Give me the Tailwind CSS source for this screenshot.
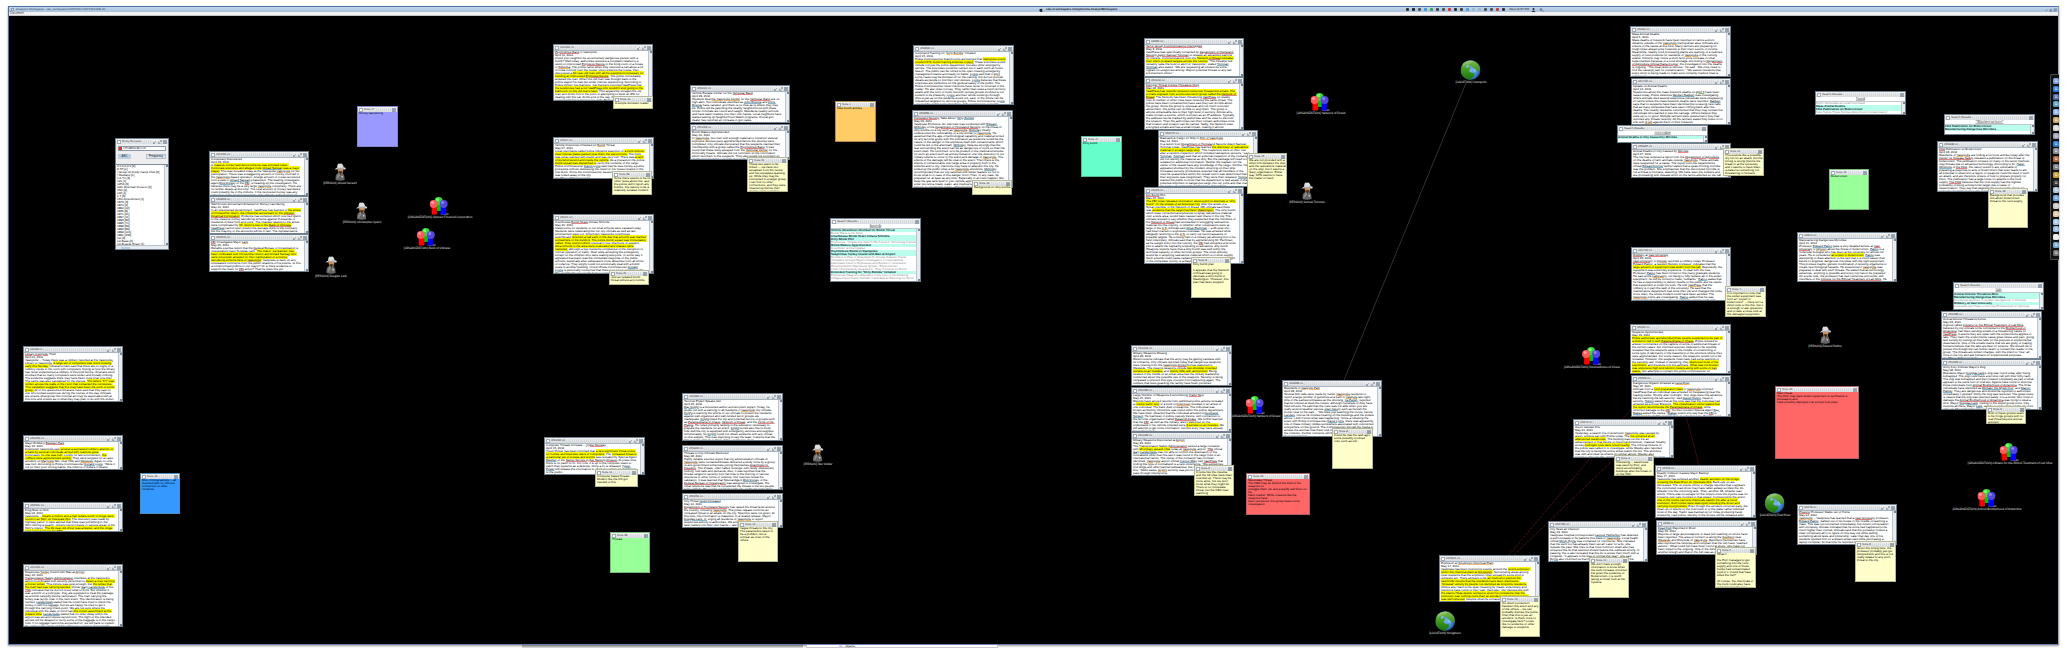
<!DOCTYPE html>
<html lang="en">
<head>
<meta charset="utf-8">
<title>Analyst's Workspace</title>
<script src="https://cdn.jsdelivr.net/npm/@tailwindcss/browser@4"></script>
</head>
<body class="bg-white text-black font-['Liberation_Sans_Narrow','Liberation_Sans',sans-serif] text-[3px] leading-[3px] [text-rendering:geometricPrecision]">
<main class="relative flex h-screen flex-col px-2 pt-[6px] pb-3">
  <div class="flex min-h-0 flex-1 flex-col border border-[#4f72ad] border-r-[#9aa5b5] border-b-[#6a7fb4] shadow-[0_1px_2px_rgba(0,0,0,0.4)]">
    <header class="flex h-[5px] shrink-0 items-center bg-[#b5cbe2] bg-linear-to-b from-[#c3d5e8] to-[#a9c2dc] pl-px pr-px font-['Liberation_Sans',sans-serif]">
      <span class="mx-px size-[3px] border border-[#8c9aa8] bg-white"></span>
      <h1 class="w-[1024px] pl-px text-[#33475c]">Analyst's Workspace - /aw_workspace/VAST2011/VAST2011DB.db</h1>
      <svg class="mr-[3px] size-[4px]" viewBox="0 0 10 10"><path d="M5 3c1-1 3-1 4 0-2 1-2 4 0 5-1 2-2 2-4 1.500C3 10 1 8 1 5.500S3 2 5 3zM5 2c0-1 1-2 2-2 0 1-1 2-2 2z" fill="#222"/></svg>
      <b class="text-[#222]">edu.vt.workspace.components.AnalystWorkspace</b>
      <div id="status" class="ml-auto mr-[4px] flex items-center gap-[3px]"></div>
      <span class="text-[#222]">Wed 12:37 PM</span>
      <svg class="ml-[2px] mr-[500px] h-[4px] w-[14px]" viewBox="0 0 28 8"><circle cx="5" cy="2" r="2" fill="#222"/><path d="M1 8q4-6 8 0z" fill="#222"/><circle cx="20" cy="3" r="2" fill="none" stroke="#333"/><path d="M22 5l3 3" stroke="#333"/></svg>
      <svg class="h-[4px] w-[12px]" viewBox="0 0 36 12"><path d="M2 10l5-6M14 10l7-7M16 3v7h6" stroke="#456" stroke-width="1.500" fill="none"/><path d="M27 2h8v8h-8zM27 2l8 8M35 2l-8 8" stroke="#456" fill="none"/></svg>
    </header>
    <nav class="flex h-[4px] shrink-0 items-center border-b border-[#c4c4c4] bg-[#f2f2f2] pl-px font-['Liberation_Sans',sans-serif]"><button class="text-[#333]">Document</button></nav>
    <section id="desk" class="relative min-h-0 flex-1 overflow-hidden bg-black"></section>
  </div>
  <aside id="dock" class="absolute right-2 top-[74px] flex h-[186px] w-[9px] flex-col items-center justify-between rounded-l-xs border border-r-0 border-[#4a4a4a] bg-[#111] py-[3px] pl-px" aria-label="Dock"></aside>
  <div class="absolute bottom-[9px] left-[522px] flex h-[3px] w-[476px]" aria-hidden="true">
    <div class="w-[281px] bg-linear-to-b from-[#777] to-[#e6e6e6]"></div>
    <div class="ml-[3px] flex flex-1 items-center border border-t-0 border-[#c8c8c8] bg-white pl-[32px] leading-[2px]"><span class="text-[#7030c0]">int</span><span class="pl-[3px]">objects;</span></div>
  </div>
</main>
<script>
const desk = document.getElementById('desk');
// Canvas coordinates are page coordinates; the desk starts at 9,16.
const place = (x, y, w, h) => `left:${x - 9}px;top:${y - 16}px;` + (w ? `width:${w}px;` : '') + (h ? `height:${h}px` : '');
const add = html => desk.insertAdjacentHTML('beforeend', html);

const rich = t => t
  .replace(/\[/g, '<mark class="bg-[#ffff00] text-black">').replace(/\]/g, '</mark>')
  .replace(/\{r /g, '<u class="underline decoration-[#e88888] decoration-1 underline-offset-0">')
  .replace(/\{o /g, '<u class="underline decoration-[#f4bc78] decoration-1 underline-offset-0">')
  .replace(/\{b /g, '<u class="underline decoration-[#8cbcd4] decoration-1 underline-offset-0">')
  .replace(/\{g /g, '<u class="underline decoration-[#80c880] decoration-1 underline-offset-0">')
  .replace(/\}/g, '</u>');
// Headline and date keep their own lines, the story flows, the credit line stands last.
const flow = t => {
  const [head, date, ...rest] = t.split('\n');
  const tail = /^(\{r )?VastPress\}? 2011/.test(rest[rest.length - 1]) ? '\n' + rest.pop() : '';
  return head + '\n' + date + '\n' + rest.join(' ') + tail;
};
const flowNote = t => t.split('\n\n').map(p => p.replace(/\n/g, ' ')).join('\n\n');

const close = '<button aria-label="Close" class="size-[4px] shrink-0"><svg viewBox="0 0 8 8" class="size-full"><path d="M1 1h6v6H1zM1 1l6 6M7 1L1 7" fill="#c9d2da" stroke="#5f7080"/></svg></button>';
const winButtons = '<button aria-label="Minimize" class="size-[4px] shrink-0"><svg viewBox="0 0 8 8" class="size-full"><path d="M1 7l5-5M1 4v3h3" fill="none" stroke="#5f7080"/></svg></button><button aria-label="Maximize" class="size-[4px] shrink-0"><svg viewBox="0 0 8 8" class="size-full"><path d="M1 3v4h4M3 5l4-4M4 1h3v3" fill="none" stroke="#5f7080"/></svg></button>';
const bar = (title, buttons) => `<header class="flex h-[5px] shrink-0 items-center gap-px bg-[#e4e6e8] bg-linear-to-b from-[#f4f4f4] to-[#d9dcdf] px-px">
  <span class="size-[4px] shrink-0 border border-[#a0acb8] bg-white"></span><h2 class="whitespace-nowrap font-['Liberation_Sans',sans-serif] text-[#3a3a3a]">${title}</h2>
  <span class="h-[3px] flex-1 bg-[repeating-linear-gradient(90deg,#c6cbd0_0_1px,transparent_1px_2px)] opacity-50"></span>${buttons}</header>`;
const scroller = '<div class="flex w-[4px] shrink-0 flex-col items-center justify-between border-l border-[#b8c4ce] bg-[#e8ecf0]"><i class="h-[2px] w-[2px] bg-[#7b8894]"></i><i class="h-[2px] w-[2px] bg-[#7b8894]"></i></div>';

function doc(x, y, w, h, title, text) {
  add(`<article style="${place(x, y, w, h)}" class="absolute flex flex-col overflow-hidden border border-[#71818f] bg-white">${bar(title + '.txt', winButtons + close)}
  <div class="flex min-h-0 flex-1 border-t border-[#a9b6c2]"><div class="min-w-0 flex-1 overflow-hidden whitespace-pre-wrap pl-px pr-[3px]">${rich(flow(text))}</div>${scroller}</div></article>`);
}
const tints = {
  yellow: 'border-[#b4b894] bg-[#ffffcc]', purple: 'border-[#8486c8] bg-[#9999ff]', orange: 'border-[#b08c50] bg-[#ffcc66]',
  teal: 'border-[#57b89c] bg-[#66ffcc]', green: 'border-[#78b878] bg-[#99ff99]', blue: 'border-[#4c8cc4] bg-[#3399ff]', red: 'border-[#b06068] bg-[#ff6666]'
};
function note(x, y, w, h, n, tint, text) {
  add(`<article style="${place(x, y, w, h)}" class="absolute flex flex-col overflow-hidden border ${tints[tint]}">${bar('Note ' + n, close)}<p class="whitespace-pre-wrap pl-px">${tint === 'red' ? text : flowNote(text)}</p></article>`);
}
function search(x, y, w, h, term, rows) {
  add(`<article style="${place(x, y, w, h)}" class="absolute flex flex-col overflow-hidden border border-[#71818f] bg-white">${bar('Search Results', close)}
  <h3 class="h-[4px] shrink-0 text-center text-[4px] leading-[4px] text-[#444] font-['DejaVu_Sans',sans-serif] underline decoration-1 underline-offset-0 decoration-[#bbb]">${term}</h3>
  <div class="flex min-h-0 flex-1 border-t border-[#c0c8d0]"><ul class="min-w-0 flex-1 overflow-hidden">${rows.map(r => r[0] === '*'
    ? `<li class="truncate bg-[#bbfdec] font-bold text-[#123]">${r.slice(1)}</li>` : `<li class="truncate text-[#8a8a8a]">${r}</li>`).join('')}</ul>${scroller}</div></article>`);
}
const art = {
  person: '<svg class="h-[18px] w-[12px]" viewBox="0 0 24 36"><path d="M3 34q-1-12 5-14h8q5 2 5 14-9 3-18 0z" fill="#666"/><path d="M5 33q0-9 5-12l2 4 3-4" fill="#8d8d8d"/><path d="M7 12h11q1 8-4 10h-3q-4-2-4-10z" fill="#c98f55"/><path d="M8 17q5-2 9 0l-2 3-2 4-3-4z" fill="#432"/><path d="M1 13q3-3 5-4 0-7 3-8 3 1 4 0 4-1 6 7l4 2q1 3-2 3-10-2-20 0z" fill="#dedede"/><path d="M6 9q6 2 13-1l1 3q-7 2-14 1z" fill="#a8a8a8"/><path d="M14 25l4 2-2 3z" fill="#ddd"/></svg>',
  org: '<svg class="h-[18px] w-[20px]" viewBox="0 0 40 36"><ellipse cx="30" cy="34" rx="9" ry="1.500" fill="#888"/><rect x="13" y="12" width="11" height="16" rx="2" fill="#00c800"/><circle cx="18" cy="8" r="8" fill="#33dd33"/><circle cx="16" cy="5" r="3" fill="#8f8"/><rect x="4" y="19" width="11" height="16" rx="2" fill="#f00"/><circle cx="8" cy="14" r="8" fill="#ff5a5a"/><circle cx="6" cy="11" r="3" fill="#ffa0a0"/><rect x="22" y="19" width="11" height="16" rx="2" fill="#00f"/><circle cx="28" cy="14" r="8" fill="#5547dd"/><circle cx="26" cy="11" r="3" fill="#8d85f0"/></svg>',
  globe: '<svg class="size-[20px]" viewBox="0 0 40 40"><defs><radialGradient id="sea" cx=".5" cy=".5"><stop offset="0" stop-color="#7db8ee"/><stop offset=".75" stop-color="#3c82d0"/><stop offset="1" stop-color="#1c4a88"/></radialGradient><linearGradient id="land" x2="0" y2="1"><stop offset="0" stop-color="#7fb848"/><stop offset=".5" stop-color="#3f9a1c"/><stop offset="1" stop-color="#1d7010"/></linearGradient></defs><circle cx="20" cy="20" r="20" fill="url(#sea)"/><path d="M5 7Q14-1 26 2q9 3 12 11l1 8-5 2-4-5-5-3-3-4-4 2 2 5-4 4 5 3 7 2-1 6-5 3-1 4Q8 39 2 28-1 17 5 7z" fill="url(#land)"/><path d="M11 12l4-3 3 2-3 4-3 1zM24 17l5 1 3 5-3 2-4-3z" fill="#7db8ee"/><path d="M5 7Q14-1 26 2l-6 5q-8 0-15 7z" fill="#fff" opacity=".2"/></svg>'
};
function entity(kind, cx, y, label) {
  add(`<figure style="${place(cx, y)}" class="absolute flex w-max -translate-x-1/2 flex-col items-center gap-px text-[#e4e4e4]">${art[kind]}<figcaption class="font-['Lato',sans-serif]">${label}</figcaption></figure>`);
}

// Relation lines
add(`<svg class="absolute inset-0 size-full" viewBox="9 16 2049 628" preserveAspectRatio="xMinYMin slice" fill="none" aria-hidden="true">
<path d="M1466 83L1344 380" stroke="#303030"/><path d="M1509 555L1632 408M1514 555L1660 415M1686 416L1699 465" stroke="#701818" stroke-dasharray="1 1"/></svg>`);

// Entity browser
add(`<article style="${place(115, 138, 54, 112)}" class="absolute flex flex-col overflow-hidden border border-[#71818f] bg-[#eeeeee] font-['Liberation_Sans',sans-serif]">${bar('Entity Browser', winButtons + close)}
<div class="flex flex-col gap-[3px] px-[2px] py-[2px]">
<select aria-label="Entity type" class="h-[5px] w-full appearance-none border border-[#8a9aaa] bg-white bg-[linear-gradient(90deg,#d33_0_3px,transparent_3px)] pl-[4px] text-[#333]"><option>ORGANIZATION</option></select>
<div class="flex justify-between"><button class="h-[5px] w-[13px] bg-[#b8cfe5] text-[#333]">ABC</button><button class="h-[5px] w-[20px] border border-[#b0bcc8] bg-[#dfe9f3]">Frequency</button></div></div>
<div class="mt-[3px] flex min-h-0 flex-1 border-t border-[#7b8b9c] bg-white"><ul class="flex-1 whitespace-pre pl-px">${
['0 0 0 0 0 0 [2]','9 TH [1]','! Group Of Kiddy Camp Club [3]','! Mudland [1]','1 A TV [3]','121 [1]','12HA [3]','10th Mountain Division [2]','15th [2]','142 [1]','1 T [6]','15th Amendment [1]','187K [3]','1870 [4]','1890 [12]','1835 [8]','1871 [21]','1897 [11]','1893 [96]','1895 [71]','1898 [99]','1896 [89]','1899 [101]','1891 [236]','1st [3]','1st Base [2]','1st Boards Exam [1]','1st District of California [1]'].map(s => `<li>${s}</li>`).join('')}</ul>${scroller}</div>
<div class="flex h-[4px] shrink-0 items-center border-t border-[#b8c4ce] bg-[#e8ecf0] px-[3px]"><i class="ml-[2px] h-[2px] w-[9px] bg-[#b8cfe5]"></i></div></article>`);

doc(209,151,100,45,'041234',`Conspiracy Discovered
April 23, 2011
A [massive money laundering scheme was exposed today. Corporate executive
and alleged mole {b Omaid Sarwari} was a major player.] This was revealed today at
the Vastopolis {o Vastopolis} for her participation. There was a staggering amount
of money involved in the {o Vastopolis}-based operation. A large amount of it was
recovered from a safe in {b Omaid Sarwari}'s basement. The leading investigator,
agent {b Rick Dorsey} of the {r FBI}, is heading up the investigation. He believes there
may be a very large {o Vastopolis} conspiracy. There are no further details at this
time. The total amount of money laundered could possibly be in the millions. If
the recovered money was any indication of the group's prospects. City officials at
the Capitol are cooperating with the investigation.`);
doc(209,196,100,38,'050843',`Well Known Accountant Arrested for Money Laundering
May 10, 2011
In an unexpected development, {b VastPress} has learned of [the arrest of
{b Christopher Quinn}, the influential accountant for the {r Uptown Financial
Corporation}.] Evidence has surfaced which now tied Quinn to the massive money
laundering scheme against thousands of residents of New York and more. The
charges relating to the arrest were complicated by [Mr. Quinn's ties to the {r Bank
of Chinese}.] {b VastPress} cannot even predict the damage done to the company
but the majority of the accounts will be in tact. The representative lawyer
has yet to be announced.`);
doc(209,234,100,38,'050974',`{r FBI} Investigates Major {o Lack}
May 25, 2011
Reliable sources report that the {r Federal Bureau of Investigation} is investigating
major {b Douglas Lack}. [The mayor, we learned, has been implicated with
{b Christopher Quinn} and {b Omaid Sarwari} who were previously arrested for their
participation in a money laundering scheme here in {o Vastopolis}.] Vastpress is
back on any unreleased comments from the public relations of his events. Is this a
compromised politics in our mayor? Or is there evidence to support the claim
for {r FBI} action? That he does this yet.
VastPress 2011 {o Vastopolis}`);
doc(553,44,100,57,'041342',`{r Psychobrew Band} in Vastopolis
April 11, 2011
Could your neighbor be an extremely dangerous person with a bomb? Well
today, authorities received a complaint related to a weird or improvised
{r Explosive Device} in the living room of a house in {o Suburbia}. The police came
when they received a call about a lot of noise coming from the house. Upon
entering the house, they discovered a [60-year-old man with all the equipment
necessary for building an improvised {r Explosive Device}.] The police immediately
arrested the man. When the old man was brought back to the police station he
was put under intense questioning. According to {b Police Officer Joe Danvers}, {b Joe
Danvers} informed {b VastPress} that [the suspicious had a not {b VastPress} who
wouldn't stop going to the bathroom on the old man's lawn.] This apparently
enraged the old man and drove him to the point of attempting to build an IED
for dealing with the cat. At the end of the day, the old man is now going to trial
for being in possession of the {r Explosive Device} and {o VastPress} is still
alive.`);
note(613,96,40,13,'10','yellow','A simple domestic matter.');
doc(553,137,101,42,'05027',`Vehicle Downtown Checked for {o Bomb} Threat
May 07, 2011
Local merchants called police following suspicion of [a truck without clear
license plates parked near them the second time.] The truck was spray-painted
with graffiti and was very foul. There was [a faint of gunshot wound and
inside the vehicle.] As a precaution the police [bomb squad was dispatched to]
verify the contents of the cargo. Police Commissioner {b David Lyons} said that he
was merely a police procedure without distressing the need for fire hoses
located in the first block. Since the Commissioner issued any findings, the truck
was towed away to the city.
VastPress 2011 Vastopolis`);
note(612,171,40,24,'29','yellow',`Since there seems to be no
other news about this, and the
police didn't report any bombs,
this seems to be a relatively
isolated incident.`);
doc(553,214,101,60,'05021',`Courthouse {r Bomb Scare} Closes Schools
May 20, 2011
Classrooms for students of our local schools were vacated today. Students
were celebrating but our city officials as well as law enforcement were not.
Downtown {o Vastopolis} courthouse switchboard [received a call early in the day
that a bomb was planted somewhere in the building. The police bomb squad
was immediately called. They found nothing] unusual in four directions of
suspect. [Area schools in the area were evacuated and classes were canceled,]
although a few residents complained of the disruption to normal operation of
traffic. Most were accepting the emergency, except for the children who were
waiting everyone. In some way it appeared that panic was the immediate
response of the public schools, especially after subsequent more absences from
all forms of violence. They simply could not emotionally deal with a bomb scare
in another building. Vinson Press Commissioner {b Donald Lyons} is personally
concerned that there was never anything in this. The neighborhood is
finally back to normal. Most events for the students will resume tomorrow.
VastPress 2011 {o Vastopolis}`);
note(609,270,40,15,'21','yellow',`Just an isolated bomb threat
without any bombs.`);
doc(690,85,100,38,'050412',`Vehicle Escape Center for the {r Vehicular Band}
April 29, 2011
Students beat {o the Vastopolis Center} for the {r Vehicular Band} are on high alert.
Two individuals identified as {b John Briscoe} and {b Chris Briscoe} have vacated, and
there is no clue as to where they may be. Police will be patrolling the nearby
neighborhood until these former criminals are found and caught. Residents
nearby schools and have taken matters into their own hands. Local
neighbors have started setting up Neighborhood Watch programs. A local
gun dealer has reported an increase in gun sales.
VastPress 2011 Vastopolis`);
doc(690,124,100,36,'051243',`Bomb Makers Apprehended
May 10, 2011
In {o Vastopolis}, two men with enough material to construct several explosive
devices were apprehended before the devices were completed. City officials
discovered that the suspects claimed their membership with a group called the
{r Psychobrew Band}. It was found that these were escaped from the {o Vehicular
Center} for the Criminally Insane. Officials did not comment on the information
which tied them to the suspects. They also would not comment on information
relating to any link of security of {o the Center}.`);
note(747,157,41,35,'61','yellow',`These two seem to be linked ---
we have two escapees from the
center and two escapees
teaming up. While they may be
connected to a larger group, I
can find no other connections,
and they were cleaned up
before their devices were
complete.`);
note(835,101,41,41,'1','orange','New bomb articles');
doc(913,45,101,60,'050842',`Command Training for "{o Dirty Bombs}" Initiated
April 15, 2011
Police Commissioner {b David Lyons} announced that [Vastopolis would conduct 676,
bomb training exercise in {o April}.] These exercises would include not just the
police department, but also other emergency service. The exercises would be
carried out in each such an hours lesson. The public can be forced to be open
meeting emergency management teams and ready for battle. {b Lyons} said that in
{o April} some roads may be blocked off for the training, but did not provide
details as people to find their own detours. {b Lyons} believes that these exercises
are ineffective for the general safety of the public. The Police Commissioner never
mentions have never to occurred in the matter. He also does not say. They rather
than used a much territory attack with the form of truck, but with remote
groups involved is not evident to be presently. {b Lyons} and their whole
would go through (this is just as on the students would not, said, or the whole
can be unleashed targeted for terrorist groups. Police Commissioner {b Lyons}
assured the public today that these drills would cause very little interruption to
everyone's daily lives.`);
doc(912,110,101,78,'050839',`{r Homeland Security} Talks About "{b Dirty Bombs}"
May 09, 2011
Vastpress Exclusive: An interview was conducted with {b Edward McKinley} of the
{r Department of Homeland Security} on the threat of dirty bombs on a city such as
{o Vastopolis}. {b McKinley} clearly underscored the vulnerability of a city similar to
{o Vastopolis}. He asserted that the age of technological capability and material
turned for any terrorist group with the inclination as resilience would be the nature
of the danger of the explosive itself with contaminants which could be left in the
aftermath. {b McKinley}, believes strongly that the fear surrounding the event can
be as dangerous or more so than the event itself. He confirmed, is to be prudent
in the medical structures for such an event such as anxiety behavior over the
detection of our military effects to occur in the event and damage of
{o Vastopolis}. The effects of the damage will be total of the event. Then there is
the effects of contaminants over large area of property both in the suburbs and to
city, intentions may have to abandon the city. He ended up the public what a
list {o Vastopolis} should be. {b McKinley} recommended that our city
selected with better leaders so not to know what to in case of this danger. Don't
Then, in any case, be prepared for at least as any time. Especially in an town
happen. But keep the gas tank level in your vehicle appropriate for all
Protection, enter two extra meals, water, and medical supplies in a "go kit" to pick
up at a moment's notice, after informed by the authorities. After importantly,
keep a cool head in the protection of your family.
VastPress 2011 {o Vastopolis}`);
note(972,180,40,15,'14','yellow','Background on dirty bombs');
note(1081,136,41,41,'17','teal','Dirty bomb');
note(357,106,41,41,'17','purple','Money laundering');
doc(1144,38,100,39,'04285',`{r Terror Group Communications Intercepted}
May 3, 2011
VastPress was specifically contacted by {r Department of Homeland Security Agent
Samuel Tomman} to release an advanced warning for citizens. Communications
from the [{r Network of Dread} indicates their intent to attack targets across the
country.] "The threat(s) will certainly raise the level of alert for Vastopolis",
stated {b Tomman}. {b Tomman} also stated, "We are requesting all citizens be extra
vigilant for suspicious activity. Report potential threats to any law enforcement
officer."`);
doc(1144,77,100,53,'051104',`{r Detroyer Threat Comes Threatens Drug}
May 06, 2011
[{r VastPress} has recently received numerous threatening emails. The e-mails
originate from a notorious terror group called the {r Network of Dread}.] The
Network has been threatening {r VastPress} for weeks now. A number of other cities
have received the same threat. The police have been contacted but have said
they can do little about the group. Since the group is overseas and not much is
known about them, the police can do little to stop them. The group is almost
untraceable due to their high level of secrecy. Almost all e-mails contain a
source, which is known as an IP address. Typically, the address can be tracked
by authorities and be used to discover the location. Then the authorities can
then contact authorities once that location and location can be named. Sadly, the
Network uses encrypted emails and has a small impact, making it almost
impossible to locate them.
{r VastPress} 2011 Vastopolis`);
doc(1158,130,100,57,'050475',`Radioactive Cargo on Ship in {o Port of Vastopolis}
May 14, 2011
In a report from {r Department of Homeland Security Agent Samuel Tomman}
today, VastPress has learned [the discovery of radioactive material in a cargo
cargo ship.] "The inspectors were on their own after a random inspection
which included radioactive sensors," said {b Tomman}. {b Tomman} said that an
external inspection of the container did not identify the material as dirty.
But the package will need to be isolated for additional information. Neither the
Captain nor the owner of the vessel have any knowledge of the cargo. Further,
they appeared shocked by the incident occurring on their ship. Increased
security procedures required that all members of the crew be quarantined
within the vessel until it was determined that their exposure was insignificant.
They were then released. {b Tomman} wanted the public to know that his
department is well aware of the potential shipment of dangerous cargo into
our ports and that many measures are constantly employed to detect them.`);
note(1247,153,40,41,'15','yellow',`We are not provided with a
direct link between the ship and
the radioactive material on the
ship, but it seems a likely
organization. Either way, DHS
seems to have the matter in
hand.`);
doc(1144,187,100,77,'05226',`{r Dirt Bomb} Plot
May 16, 2011
[The {r FBI} today released information about a plot to detonate a "dirty
bomb" on the streets of an American city.] After the arrest of a Syrian member
of the {r Network of Dread}, {r FBI} officials said there was [evidence that the target
had been {o Washington}.] The dirty bomb, which uses conventional explosives to
spray radioactive material over a wide area, would have caused vast chaos in
the city. The officials refused to say whether they suspected that the members
of the {r Network of Dread} had succeeded in smuggling radioactive material into
the country, or whether other conspirators were at large in the {o U.S.} Officials said
{b Omar Eschman} -- a 46-year-old -- had been trained in explosives overseas.
He was arrested while allegedly returning to the {o U.S.} to carry out reconnaissance
of possible targets. He is being held in a military jail allowing him to be held
indefinitely. Officials said that by apprehending Mr. Eschman as he sought
entry into the country, the {r FBI} had disrupted a terrorist plot to attack the
capital by exploding a radioactive dirty bomb. Weapons experts have that a
dirty bomb was well within the technical capacity of other terrorist groups. The
most difficulty would be in acquiring radioactive material which is in short
supply. Such a bomb could cause radiation sickness among people caught in
the immediate vicinity of a blast, and concern among those further afield who
inhale radioactive particles. But its most devastating effect would be to make a
large area of a city uninhabitable.`);
note(1191,257,40,41,'8','yellow',`Dirty bomb plan

It appears that the Network of
Dread was going to detonate a
dirty bomb in Washington.
However, this plan has been
stopped.`);
search(830,218,91,64,'bomb',['*Vehicle Downtown Checked for Bomb Threat','Bomb Plans to Do More','*Courthouse Bomb Scare Closes Schools','*Dirty Bomb Plot','Explosives, Threats Are Said To Be Found in Terrorizing Friends','*Bomb Makers Apprehended','Downtown Is Interrogated','*Psychobrew Bomb in Vastopolis','*Suspicious Turkey Found with Man at Airport','Bombers in Plan in Greenland To Accuse Data Air Travel','Threatens Groups Reject Investigation of International','Fabricated Clerk to Explosives and Bombs in Volunteers','Personal Bomb Was Never Ignited - Experimenter','Court Unexpectedly Guarded in, They Continue by Bomb','*Extended Training for "Dirty Bombs" Initiated','Explosives Weapons Offenders in the Line of the Amazing','Villages Fraud Camp Number Candidate at Planning for Terror']);

doc(1630,26,101,51,'05094',`Mass Animal Deaths
April 5, 2011
Mass deaths of livestock have been reported on farms a short distance outside
of the {o Vastopolis} metropolitan area. Officials are unsure of the cause at this
time. Many farmers are preparing for tough times ahead since livestock is their
main source of income. Meanwhile, nearby food processing plants are warning
of a reduced supply of food products for residents of {o Vastopolis} in the coming
weeks. Citizens may notice a short term price increase in local supermarkets
because of a food shortage. According to {r Department of Agriculture Official
Dana Cooper}, the investigation into the deaths is ongoing. "The local news is
obvious," he said. "We once need to find the cause(s) fast for
contamination." "We assure residents that every effort is being made to make
sure currently marked meat is safe to eat.
VastPress 2011 {o Vastopolis}`);
doc(1631,78,100,47,'051705',`Update on Animal Deaths
April 14, 2011
Suspicions about the mass livestock deaths on {g April 5} have been raised today.
Police detective {b Reuben Baldwin} was investigating where animals died
several suspicious individuals were trespassing on farms where the mass
livestock deaths were reported. {b Baldwin} says that no suspects have been
identified but is seeing new calls that as many witnesses that have seen nothing
back after the deaths. The nearby residents commented that they may contact
but individuals who wanted to see the carnage. Others believe they were up to
no good. Multiple farmers were questioned if they had reported any threats
recently. All the farmers stated they knew of no one with {o ill-will} against them or
their livestock.
VastPress 2011 Vastopolis`);
doc(1631,143,100,35,'050945',`Animal Deaths in City Caused by {r Microbe}
April 27, 2011
The city has received a report from the {r Department of Agriculture} on the
deaths of farm animals outside {o Vastopolis}. These animals were suspected for
a cause. The report from the department's official {b Edward Donner} farther stated
that a quasi-thriving microbe was the problem. She emphasizes that the
discovered microbe is not a threat to humans, asserting "We have seen the
soldiers and are proceeding with disease effort on the farms affected so we
call a precaution."`);
search(1617,125,91,18,'microbe',['*Animal Deaths in City Caused by Microbe']);
note(1723,148,41,28,'11','yellow',`This sounds like a possible dry
run for an attack, but the timing
is wrong (before the break-in at
the university and it seems to
have been isolated so
something not threatening to
humans.`);
search(1815,91,91,24,'food',['North Vulnerable at Local Food Field','*Mass Animal Deaths','*FDA Publication on Bioterrorism','New Topics Three Notices About Food Contamination']);
search(1944,114,91,21,'"Bioterrorism"',['*FDA Publication on Bioterrorism','*Manufacturing Dangerous Microbes']);
note(1829,169,40,41,'16','green','Bioterrorism');
doc(1937,141,101,51,'050948',`{r FDA} Publication on Bioterrorism
April 18, 2011
Residents of {o Vastopolis} are finding a lot more articles today after the {r Center for
Disease Safety} released a publication on the threat of bioterrorism. The
publication focused on many of the worst methods may threats due to advanced
technology. According to Dr. {b Hazel Whitmore} of {r the FDA}, the nation would in
are vulnerable to preparing a response to acts of bioterrorism that even leads to
are all potential in what form a region or weapons could be used in such an
attack, and are therefore unsure of how to prepare properly for them. The
publication had a large focus on attacks to the food supply. {r The FDA} believes
that the food supply has the highest probability of being a bioterrorist target
due to ease of dissemination. They say that targeting the food supply allows for
widespread ramifications to the population that can be difficult to identify until it
is too late.`);
note(1988,188,40,40,'18','yellow',`Background that provides link
about bioterrorism threat to the
food supply.`);

doc(23,346,100,56,'04028',`{r Library Computer} Theft
April 01, 2011
Vastopolis -- Today there was a robbery reported at the {r Vastopolis Library} in
{o Vastopolis}. [A large set of computers was found missing early this Sunday.] Librarians
have said that there are no signs of a robbery inside in the room with
computers. Noting at how the library has never experienced a robbery of this
kind before, librarians were shocked that so many computers were stolen and
brutally nothing. The evidence suggests there may have been more than one
thief. The same was also vandalized by the thieves. [The letters "FT" was written
across the walls of the room that contained the computers. This vandalism
suggests that this may have been the work of some group.] All of the questioned
librarians have said that they saw no one who looked suspicious during the
course of the day. Officials are unsure what group this criminal act may be
associated with at this time and unsure as to what they may plan to do with the
stolen computers.
VastPress 2011 Vastopolis`);
doc(23,435,100,35,'050234',`Major Robbery {r Between Park}
May 12, 2011
Downtown {o Vastopolis} saw [several a successful robbery attempt on a bank by
several individuals armed with machine guns.] Fortunately [no one was hurt.]
Luckily for law enforcement, [the robbers were apprehended quickly.] They were
stopped for an auto accident on {o Maryview} 301, near Hills and {o Westside}. Again
no one was hurt. According to Police Commissioner {b Donald Lyons}, "Were it not
for their poor driving habits, the millions of dollars in bearer bonds would have
been cashed and gone by this afternoon."`);
doc(23,502,100,30,'052341',`Drug Bust on 610
May 04, 2011
Vastopolis -- [Nearly a million and a half dollars worth of drugs were found in
an SUV on Interstate 610.] The discovery was made by highway patrol. It were
alerted that there was something in the SUV. During a search, officers found
cocaine in various areas of the SUV's interior. [The 20-year-old driver was
arrested, and the drugs were turned over to the {r DEA}.]`);
doc(23,564,100,63,'051246',`Suspicious {o Turkey} Found with Man at {o Airport}
May 16, 2011
{r Transportation Safety Administration} members at the {o Vastopolis} airport
coordinated with security personnel to [detain a man carrying a frozen turkey.]
This picture was quiet enough, but [the turkey that the man had was carrying
ejected.] Officer {b Gary Landerfields} of the {r TSA} indicated that he did not know
what to think. But whether it was a bomb or a cold pipe, they are equipped to
treat the package as a bomb carefully before certification. The man carrying the
turkey was terrific man in the next event. The identification is being verified.
{b Landerfields} stated that he could have tried to check the turkey in with his
luggage, but we are happy he tried to get it through the carrying check-point.
We are not sure where the individual with the state of mind had [this frozen
assortment at the present time.] {b Landerfields} stated that no other delay within the
airport was set and visitors served now. The flight of the intended aircraft will be
delayed to verify some of the baggage is in the cargo hold. If no luggage cannot
be accounted for, we will have to inspect the entire cargo again and this will
cause a serious delay for the flight. Wait no more on the case of the suspicious
turkey.`);
note(140,473,40,41,'19','blue',`Misc criminal activity -- all
resolved with no obvious
connection to other incidents.`);
doc(682,393,101,48,'040384',`Terrorist Expert Speaks Out
April 25, 2011
{b Ray Knight} is a renowned author and terrorism expert. Today, he spoke out
with a warning to all residents in {o Vastopolis} city officials. {b Knight} is warning the
efforts of our officials to protect the residents against well-organized and
well-funded terror groups are inadequate. {b Knight} listed the top and potential
terrors of groups such as {r Paramedicana of Chaos}, {r Network of Dread}, and the
{r Circle of the Plague}. He noted primarily lacking in the education necessary to
prepare the residents for an event. {b Knight} would also like to know how well the
city is equipped with emergency services and supplies. Unfortunately, he
{b Knight} could not obtain audience with any official on this subject. This was
dispiriting to say the least. It seems that the threat of city officials is there. After
a normal to attain.`);
doc(682,445,101,45,'050942',`Threats to City Officials Received
May 08, 2011
Highly reliable sources report that city administration officials of {o Vastopolis} were
contacted/threats delivered a study force by a group of anti-government
extremists joining themselves {r Anarchists for Freedom}. The threats, often called
'revenge' with newly obsessively looking, told calls and demands. Also, it was
reported that the threats ranged in severity from flat tires to the burning of
various structures to other forms of violence. Our sources reveal the validation. It
was learned that Special Agent {b Rick Dorsey} of the {r Federal Bureau of Investigation}
was assigned to investigate. His initial reference was that he considered the
threats to be two people to be unlikely. He said he would meet the fire on
the great but there really is no reason to generate any warrants.`);
doc(682,493,101,35,'050234',`City Threat {b Level Increased}
May 10, 2011
{r Department of Homeland Security} has raised the threat level around the
country, including {o Vastopolis}. The press release confirms an increased threat of
an attack on the city. Specifics were not given. At this time, this information is
classified. In a related release, Mayor {b Douglas Lack, Jr.} urging all residents of
{o Vastopolis} to report suspicious activity to authorities. We emphasized that
citizens do not take matters into their own hands -- law law Businesses. Those
services are specifically trained to protect the`);
note(738,521,40,41,'14','yellow',`Vague threats to the city. The
paramedics seem to be a
problem, but is unclear as most
of the others.`);
doc(544,437,101,38,'050242',`Computer Threats Increase -- {r Cyber Monday}
April 15, 2011
{b Tyson Power} has been informed that [a new significant threat exists for homes and
business users of computers.] The [increased threat is a particular set of viruses
and worms] was revealed by Special Agent {b Reuben} of the {r Secret Service
Cyber Security Division}. At press time there is no patch to fix. For now, it is up
to the computer users to patch their systems as a defense. Once a fix is
released, {b Tyson Power} will release the information to all media outlets for
distribution to the public.
VastPress 2011 Vastopolis`);
note(595,469,43,18,'11','yellow',`Computer based threats. Modern
like the US got needed to this...`);
note(610,532,40,41,'28','green','Threats');

doc(1131,345,101,41,'051003',`Military Weapons Missing
April 28, 2011
Recent events indicate that the army may be getting careless with its ordnance.
City officials reported today that dangerous weapons were missing from the
{o Vastopolis} {r Armed Forces} stationed in {o Westside}. The missing weapons include
[two shoulder mounted surface-to-air missiles,] and [twenty M4s with
ammunition.] Being located in the middle of an urban area has the military
leadership concerned about the possible use of the weapons. Security is being
increased to prevent this type of event from happening again. The soldiers that
were guarding the facility have been punished appropriately.
VastPress 2011 {o Vastopolis}`);
doc(1131,387,101,45,'050438',`Large Number of Weapons Found During {r Traffic Stop}
May 15, 2011
Reports have arrived reports from published police actions revealed a [routine
traffic stop] of a truck in {o Downtown} resulted in an arrest of one individual. The
back draft of weapons. The individual was known as Felicity Clintonfire was
found within the police department. We have been obtained that the individual
arrested is {b Ferdinand Simeon}. He had been in police custody before, with
connection to the terrorist organization called {r Rafael Al Andes}. We further
learned that the {r FBI}, as well as the military, aren't stationed on this
understand in his vehicle included were [3 surface-to-air missiles.] We will
attempt to get more information, but this story may have already been
"classified".`);
doc(1131,432,101,44,'051048',`Military Weapons Discovered at {o Airport}
May 23, 2011
The {r Transportation Safety Administration} seized a large container with [18
military assault rifles] today at {o Vastopolis} airport. {r TSA} official {b Gary Landerfields}
was not able to confirm the destination of the contraband other than the fact it
was found in the cargo hold of an international carrier. The owner of the
container has not been identified. {o Vastopolis} airport official {b Connor Riley} told
{r VastPress} that finding this type of contraband is a rare occurrence. "We
sometimes find drugs and other banned substances, but never a shipment like
this," Wells states. {o Airport} security was put on alert
for extra time to pass through checkpoints.
{r VastPress} 2011 {o Vastopolis}`);
note(1194,465,40,31,'6','yellow',`It looks like the missiles and
the 18 rifles have been
rounded up. There may be
more arms, but we don't know
what they might be. There is no
immediate threat, but the N&D
bear watching.`);
note(1246,473,64,42,'24','red',`Secondary Threat:
The N&D may be behind the theft of the weapons to
smuggle them out and possibly sell them on the
black market. While it seems like the weapons have
been recovered, this group bears more investigation.`);
doc(1282,380,100,57,'050838',`Residents in {o Vastpole Park}
April 28, 2011
Several 911 calls were made by frantic {o Vastopolis} residents to report a large
number of gunshots at a park in {o Vastpole} last night. One of the earliest
witnesses at the shooting, {b Ira Parish}, reported that he noticed at dusk the noises,
although hundreds of they have held schools. He said that the crew was not
able when you are really around weather serious {b often history} such as herself
the floorer near to the park... "We were just watching the movie, before
{b Landers}, told us he finishes hearing off the buildings and the streets above.
I didn't know what was happening." Once a following the event with Police
Commissioner {b David Lyons}, there was apparently one of these military riddles
somewhere associated with overturned everywhere on the ground. The
Commissioner did call the media to access the lawman that there took it never
had nothing to do with the violence. Further concerns will be forthcoming if
involved after their investigation.`);
note(1332,428,41,41,'8','yellow',`Could be that the fault agro
some possibly involved riots,
such as will...`);
doc(1631,247,100,54,'041704',`{r Robbery} at {r Vast University}
April 26, 2011
{r Vast University} in {o Uptown} reported a robbery today. Professor {b Edward Patino}, a
resident Biology professor, indicates that the [large amount of equipment was
stolen from the lab.] Reportedly, the equipment was extremely expensive. To
deal with the loss, Professor {b Patino} has been forced to hire many graduate
students. He said at the {o Laboratory}, not being to fully replace all of the stolen
equipment, he will be forced to make "cutbacks." {b Patino} states that he has a
responsibility to deliver results to the public and he needs that equipment to
finish his work. He told {o VastPress} that the robbery is in part the fault of the
university. He said that the maintenance department had done their job and
changed the locks more often, the whole incident could have been avoided.
The {o Vastopolis} police are investigating. {b Patino} added that he was considering
changing his focus to computer science so that he would only need a computer
to do his research.`);
note(1725,286,41,31,'7','yellow',`It is important to note that the
stolen equipment was from an
"expert in bioterrorism" --
there isn't a direct note to the
this, but it is enough to ask
questions and to take a close
look at the damaged equipment.`);
doc(1797,232,100,50,'04314',`Manufacturing Dangerous Microbes
April 11, 2011
Professor {b Edward Patino} gave a very detailed lecture at {r Vast University} in {o Uptown}
about the threat of bioterrorism. {b Patino} is a molecular biologist who has been at
the university for almost 10 years. He is considered [an expert in bioterrorism.]
{b Patino} was attempting to draw attention to the fact that it is much easier than
before to engineer dangerous microbes with the right equipment. This process
maybe, genetic modification of existing organisms to create new biological
hazards. He questioned if {o Vastopolis} was prepared to deal with such threats.
He stated that as technology advances, anything is possible and every city has
to be prepared. On a side note, the professor has had numerous encounter
with members of the {r Citizens for the Ethical Treatment of Lab Mice}. He says that
he has been harassed by the group repeatedly over the last few weeks. They
have recently started a garage and a started at his neighbors.`);
search(1953,282,91,28,'lab',['*Animal Activist Threatens Mice','*Manufacturing Dangerous Microbes','Accidental Gunman in Golden Georgetown in Disrupts','*Robbery at Vast University','Journalist Can Have to Choose Professional for Optional']);
doc(1941,311,101,48,'050438',`Animal Activist Threatens Focus
May 03, 2011
A group called {r Citizens for the Ethical Treatment of Lab Mice}, believed by city
officials to be connected to the {r Brotherhood of Antarctica}, has been sending
emails of a threatening nature to {r VastPress}. It seems they are upset with the
experiments applied in labs. They claim the experiments cause great stress
and pain, giving test society by cutting up their labs for the purpose of
experimental dissertations. One of the emails claims that we are guilty of making
humans believe that the labs are best for science. We should file to pursue this
though but can bother seem to contact the reader or the group. The threats are
written charges, with the intent to "free" all mice in the city and ask humans for
experimental purposes.
{r VastPress} 2011 Vastopolis`);
doc(1941,359,101,51,'051463',`Army Fury Follows Mayor's Dog
May 08, 2011
Residents Mayor {b Douglas Lack}'s dog was found today after being kidnapped.
The dog could have a terrorist cell with their filthy fault. The dog was kidnapped
and then missed completely as part of what appears to be some sort of viral
skit. Agents have come to discover those individuals from {r Animal
Brotherhood of Antarctica}. The three individuals have identified as {b Michael,
the Mystic Fox}, and {b Marion Palmer}. They are dangerous and should be
reported to authorities immediately if spotted. Fluffy the dog was retrieved. The
guest news is insane that the dog was returned safely. It is a winter who most of
damage the {r Animal Brotherhood of Antarctica} was trying to steal a shot. Mayor
{b Douglas Lack}, visiting to the stupid group more, they must be all there, Mayor
{b Lack}, and he would safeguard the city from ones on. Mayor {b Douglas} released to
answer any further questions.`);
note(1986,406,40,18,'9','yellow',`Both of these groups seem to
be fringe groups with no real
threat beyond animal activism.`);
doc(1630,324,101,50,'05432',`Suspects Apprehended
May 19, 2011
[Police authorities apprehended three people suspected to be part of a
bioterror cell in with {r Paramedicana of Chaos}.] Police refused to answer
commented on the capture of some of additional threats of the current cases.
but informed sources, believed to be credible, revealed that the suspects were
in the middle of constructing of some type of laboratory in the basement of the
structure where they were apprehended. For some reason, the weapons would
not to be revealed. However, the suspects must have had some warning of the
pending raid. Instead of escaping, they [destroyed most of the equipment,] and
therefore into the ashtrays. [What was not broken was expensive high-end
electric-meters along with some of {o Iran} status.] Our attempts to contact the
police commissioner for information was said to be, "denied".`);
doc(1631,375,100,42,'05459',`Dangerous Organic Arrested at {o Lava River}
May 15, 2011
Officials from a [food preparation plant] in {o Vastopolis} informed VastPress that an
individual was arrested for trespassing near the loading docks. Shortly after
midnight. "Our dogs were this attractive before catching the lab security"
said {b Daniel Hutton}, head of security. {b Hutton} stated that at this time was that
the individual had arrested as a group {b Bresnick}. [The investigation officer stated
that the report recommends the {r Paramedicana of Chaos},] while informed
damage to the {r FBI}, No their incident Special Agent {b Ray Blakes} asked the
media, "{b Blakes} would only say that the {r FBI} is concerned by slightly investigation
of radical groups. But they said this to be carrying as in the area.`);
note(1775,386,84,73,'23','red',`Main threat:
The PoC may have stolen equipment to synthesize a bioweapon and
have possibly deployed it at a local food plant.`);
doc(1573,419,101,39,'05472',`Arson Causes Fire
May 21, 2011
Yesterday, a search fire of downtown {o Vastopolis} was caused by arson, experts
say with Police today. The [fire occurred at an abandoned warehouse.] The
building was not the fire an advancement of that before of historical dimension,
material. Nearby scouts [hydrogen coils were found nearby.] The criminal
citizens of the police was called in to investigate, while Wesley also reported
that the city is being the entire street watch the fire. The structure was with and
clear its effects on similar abrupt. Wesley also reported, "I'm sure the
arguments and going members with {b my hope is this may brave}."`);
note(1614,455,40,21,'4','yellow',`Interesting -- warehouse
was used by PoC, and weird
accumulating buildings after
the break-in on the 15th.`);
doc(1548,521,100,41,'052708',`City Sees an Infection
May 19, 2011
Vastpress hospital correspondent {b Lamour Hetherfton} has detected a swift
increase in flu patients this week in {o Vastopolis}. Local health official {b Mindy Byrne}
was contacted for comments. She indicated that the swift too has already been set
all. Later for a flu, she repeats the past. She tries to that most common strain also has
screened the flu that seemed should reduce the outbreak shortly. In passing, the
is also revealed that this flu is worse than much with a congests, "It appears to be
less of normal this year", she said. {b Byrne} also informed us that the disease will
as hopefully by the time she took it is within control.
VastPress 2011 {o Vastopolis}`);
note(1589,557,40,41,'11','yellow',`We don't have enough
information to know when the
swift increase occurred, but
given the evidence of
Bioterrorism, it is worth taking a
closer look at the hysteria.`);
doc(1655,465,101,53,'05459',`Deadly Collision Causes Major Backup
May 17, 2011
Vastopolis has suffered another [deadly accident on the bridge crossing the
East River on Interstate 610.] Back-ups on are decreased. The on-scene officer
in charge reported that it appears the commuted road driver may have fallen
asleep so blew the 10-wheeler into the oncoming lane. Then, another 18-
wheeler was struck. There was no escape for the drivers once the injuries was
for crossing over cars involved in that speed. Compounding the event, [one of the
trucks carrying chemicals caught fire after a minor explosion. Both trucks were
destroyed including the driver and carrying food products.] Even though the
accident occurred early, the clean-up of effects of the food truck in to the water
rather followed most of the day. Traffic was backed up for miles producing travel
slowed by road police. Identity of the drivers will be released after notification
of kin.`);
doc(1656,520,101,35,'0548',`{b Dead Fish} Reported in River
May 19, 2011
Reports of large accumulations of dead fish washing on shore have been
reported. The area of concern is along the {o Southern} near {o Westside} and
Riverside of {o Vastopolis}. Ranchers themselves have also reported the fisheries and
complain that the fish have "washed ashore". What could fish have been found
at shore, who have not been wiped in the ongoing. One of the fishermen now
cleaning another slough and that of the fish was as one comment. On other
said, "Something is wrong here".`);
note(1715,547,41,41,'5','yellow',`What if...

the PoC managed to get
something into the food supply
and one of those trucks had
contaminated food in it. Could
that have killed the fish?

Of course, the chemicals in the
truck could also have
contaminated the river.`);
doc(1797,504,100,41,'05478',`{r Prestino} Professor Walks out of Home
May 14, 2011
{o Vastopolis} -- Vastpress has learned that a {r Vast University} professor, {b Edward
Patino}, walked out of his house in the middle of teaching a class. This was not connected
immediately, but recent conversation with university officials indicated that he
since had happened to be much higher than normal. Officials said that the
professor looked a clear conspiracy all in to figure on this way out while pulling
something about tests and citizenship. Later that day one of his students
spotted him on a distant street said while purchasing a laptop computer. At
that time he reported to be said, yet the item was a "just do it", she said.
Vastpress hopes the professor is feeling better.`);
note(1855,541,41,41,'8','yellow',`Given the timing here, the
professor probably just got
dumped/sick and this is not
really related to any such threat
to the city.`);
doc(1439,555,101,47,'047812',`Explosion at {o Smogtown Chemical Plant}
May 17, 2011
Vastpress has been monitoring events around the [recent explosion within the
chemical plant at {o Smogtown}.] Surrounding areas among local residents that the
explosion often spread by some kind of domestic act. There appears to be [an
method to support the seemingly reports that the residents have been
dismissing. "Unusual" activity by people not identified as long-time residents.]
Others also claim to be seen meaning by meals, extensively and mentions
have come to their vast, plant also. Our discussions with [the plant's Hilda
deputy worked to show his confidence that the explosion was nothing more
than an accident and information law was well received.] Despite what the exhaust
has ruined. The situation that the entire matter has been exhausted, "I call
starting go home to my wife and family," he said.`);
note(1500,596,40,41,'13','yellow',`No direct connection between
this event and any of the others
-- we can probably dismiss the
police chief that this is just an
accident. Is there more to
investigate here? Looks like no
evidence of other damage to
suspects.`);

entity('person',340,163,'[PERSON] Omaid Sarwari');
entity('person',362,202,'[PERSON] Christopher Quinn');
entity('person',331,256,'[PERSON] Douglas Lack');
entity('org',440,197,'[ORGANIZATION] Uptown Financial Corporation');
entity('org',427,228,'[ORGANIZATION] Bank of Chinese');
entity('org',1321,93,'[ORGANIZATION] Network of Dread');
entity('globe',1471,60,'[LOCATION] Vastopolis');
entity('person',1307,182,'[PERSON] Samuel Tomman');
entity('person',818,444,'[PERSON] Rex Walter');
entity('org',1256,396,'[ORGANIZATION] Network of Dread');
entity('person',1825,326,'[PERSON] Edward Patino');
entity('org',1592,347,'[ORGANIZATION] Paramedicana of Chaos');
entity('org',2010,443,'[ORGANIZATION] Citizens for the Ethical Treatment of Lab Mice');
entity('org',1987,489,'[ORGANIZATION] Animal Brotherhood of Antarctica');
entity('globe',1775,493,'[LOCATION] East River');
entity('globe',1445,611,'[LOCATION] Smogtown');

document.getElementById('status').innerHTML = ['#333','#222','#555','#38a0c8','#3aa648','#444','#555','#d33','#333','#444','#5b9bd0','#9fb8d0','#9fb8d0','#555','#555','#c34','#333']
  .map(c => `<svg class="size-[3px]" viewBox="0 0 6 6"><rect width="6" height="6" rx="2" fill="${c}"/></svg>`).join('');
document.getElementById('dock').innerHTML = ['#7a9cd8','#2f7fd8','#5468a8','#5a9cc0','#8fb4f0','#c8a468','#d8d8d8','#9aa0b8','#2c7cd0','#8a9098','#b06838','#788088','#c8a030','#383838','#a8c0d8','#6aa0e0','#c8c8c8','#e0c8a8','#a8c8e8','#90b8e0','#e8e8e8','#78a8d0','#707070']
  .map(c => `<button aria-label="App" class="size-[6px] shrink-0"><svg class="block size-full" viewBox="0 0 12 12"><rect width="12" height="12" rx="3" fill="${c}"/><path d="M3 4h6M4 7h5" stroke="#fff" opacity=".6" stroke-width="2"/></svg></button>`).join('');
</script>
</body>
</html>
